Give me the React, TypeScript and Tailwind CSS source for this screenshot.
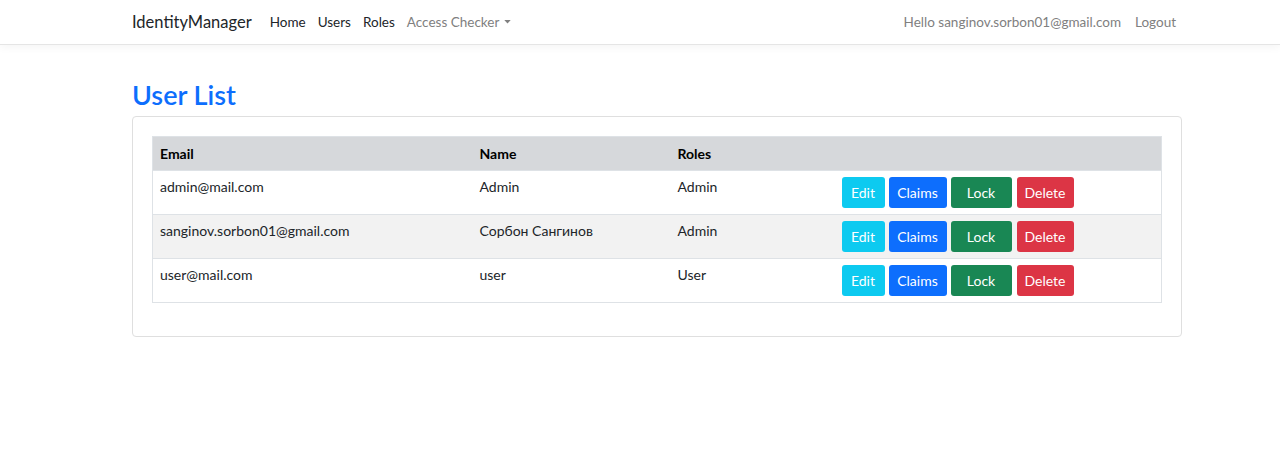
const users = [
  { email: 'admin@mail.com', name: 'Admin', roles: 'Admin' },
  { email: 'sanginov.sorbon01@gmail.com', name: 'Сорбон Сангинов', roles: 'Admin' },
  { email: 'user@mail.com', name: 'user', roles: 'User' },
]

export default function App() {
  return (
    <div className="min-h-[469px] bg-white text-[14px] text-[#212529]" style={{ fontFamily: 'Lato, "Noto Sans", sans-serif' }}>
      {/* Navbar */}
      <nav className="h-[45px] border-b border-[#e5e5e5] shadow-[0_3px_8px_rgba(0,0,0,0.04)]">
        <div className="ml-[132px] flex h-full w-[1044px] items-center">
          <span className="mr-[18px] text-[16.5px] text-[#212529]">IdentityManager</span>
          <ul className="flex items-center gap-[12px] text-[13.5px]">
            <li className="text-[#212529]">Home</li>
            <li className="text-[#212529]">Users</li>
            <li className="text-[#212529]">Roles</li>
            <li className="flex items-center gap-[5px] text-[#808080]">
              Access Checker
              <svg width="7" height="4" viewBox="0 0 8 5"><path d="M0 0h8L4 4.5z" fill="#808080" /></svg>
            </li>
          </ul>
          <div className="ml-auto flex items-center gap-[14px] text-[13.5px] text-[#808080]">
            <span>Hello sanginov.sorbon01@gmail.com</span>
            <span>Logout</span>
          </div>
        </div>
      </nav>

      <main className="ml-[132px] w-[1050px] pt-[34px]">
        <h1 className="mb-[5px] text-[27px] font-semibold leading-[32px] text-[#0d6efd]">User List</h1>
        <div className="rounded-[4px] border border-[#dfdfdf] px-[19px] pb-[33px] pt-[19px]">
          <table className="w-full border border-[#dee2e6] text-left">
            <thead>
              <tr className="h-[34px] bg-[#d6d8db] text-black">
                <th className="w-[320px] px-[7px] font-bold">Email</th>
                <th className="w-[198px] px-[7px] font-bold">Name</th>
                <th className="w-[164px] px-[7px] font-bold">Roles</th>
                <th className="px-[7px]"></th>
              </tr>
            </thead>
            <tbody>
              {users.map((u, i) => (
                <tr key={u.email} className={`h-[44px] border-t border-[#dee2e6] ${i === 1 ? 'bg-[#f2f2f2]' : 'bg-white'}`}>
                  <td className="px-[7px] pt-[5px] align-top">{u.email}</td>
                  <td className="px-[7px] pt-[5px] align-top">{u.name}</td>
                  <td className="px-[7px] pt-[5px] align-top">{u.roles}</td>
                  <td className="px-[7px] py-[6px]">
                    <div className="flex gap-[4px] text-[14px] text-white">
                      <button className="h-[31px] w-[43px] rounded-[3px] bg-[#0dcaf0]">Edit</button>
                      <button className="h-[31px] w-[58px] rounded-[3px] bg-[#0d6efd]">Claims</button>
                      <button className="h-[31px] w-[61px] rounded-[3px] bg-[#198754]">Lock</button>
                      <button className="ml-[1px] h-[31px] w-[57px] rounded-[3px] bg-[#dc3545]">Delete</button>
                    </div>
                  </td>
                </tr>
              ))}
            </tbody>
          </table>
        </div>
      </main>
    </div>
  )
}
